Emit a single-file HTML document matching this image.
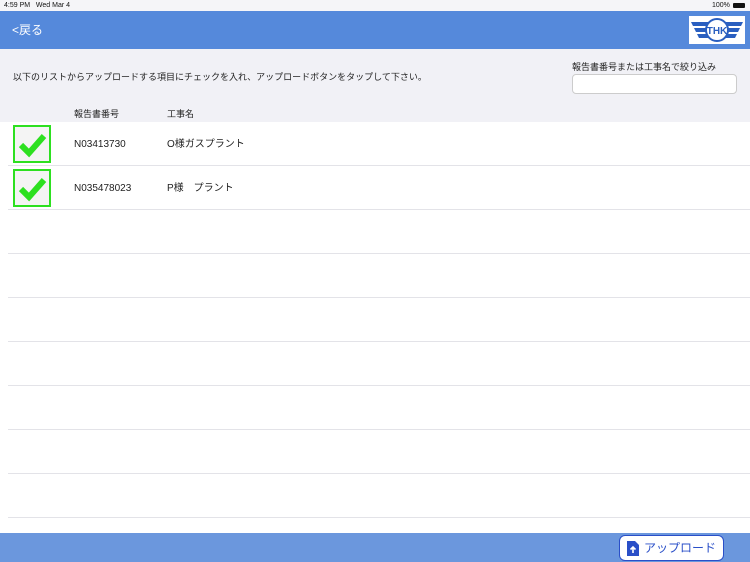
<!DOCTYPE html><html><head><meta charset="utf-8"><style>
body{margin:0;width:750px;height:562px;overflow:hidden;background:#f1f1f6;font-family:"Liberation Sans","Noto Sans CJK JP",sans-serif;position:relative}
.a{position:absolute}
.row{position:absolute;left:0;width:750px;height:44px;background:#fff}
.row:after{content:"";position:absolute;left:8px;right:0;bottom:0;height:1px;background:#e3e3e8}
.cb{position:absolute;left:13px;top:3px;width:34px;height:34px;border:2.5px solid #2de020;background:#f4f4f4}
.t{position:absolute;font-size:10px;color:#222;line-height:12px;white-space:nowrap}
.row .t{top:1px;line-height:43px}
</style></head><body>
<div class="a" style="left:0;top:0;width:750px;height:11px;background:#f5f5f8;font-size:7px;color:#111;line-height:11px"><span class="a" style="left:4px;top:0">4:59 PM&nbsp;&nbsp;&nbsp;Wed Mar 4</span><span class="a" style="left:712px;top:0">100%</span><span class="a" style="left:733px;top:3px;width:12px;height:5px;background:#111;border-radius:1px"></span></div>
<div class="a" style="left:0;top:11px;width:750px;height:38px;background:#5589db"></div>
<div class="a" style="left:12px;top:23px;color:#fff;font-size:12px;line-height:14px">&lt;戻る</div>
<svg class="a" style="left:689px;top:16px" width="56" height="28" viewBox="0 0 56 28"><rect width="56" height="28" fill="#fff"/><g fill="#2a5fc0"><polygon points="2,6 20,6 20,10 4,10"/><polygon points="5,12 20,12 20,16 7,16"/><polygon points="8,18 20,18 20,22 10,22"/><polygon points="54,6 36,6 36,10 52,10"/><polygon points="51,12 36,12 36,16 49,16"/><polygon points="48,18 36,18 36,22 46,22"/></g><circle cx="28" cy="14" r="11" fill="#fff" stroke="#2a5fc0" stroke-width="2"/><text x="28" y="18" font-size="10" text-anchor="middle" fill="#2a5fc0" font-family="Liberation Sans" font-weight="bold">THK</text></svg>
<div class="t" style="left:13px;top:71px;font-size:9px">以下のリストからアップロードする項目にチェックを入れ、アップロードボタンをタップして下さい。</div>
<div class="t" style="left:572px;top:61px;font-size:9px">報告書番号または工事名で絞り込み</div>
<div class="a" style="left:572px;top:74px;width:163px;height:18px;background:#fff;border:1px solid #ccc;border-radius:4px"></div>
<div class="t" style="left:74px;top:108px;font-size:9px">報告書番号</div>
<div class="t" style="left:167px;top:108px;font-size:9px">工事名</div>
<div class="row" style="top:122px"><div class="cb"><svg width="34" height="34"><path d="M6 18 L14 26 L29 9" stroke="#2de020" stroke-width="6" fill="none"/></svg></div><div class="t" style="left:74px">N03413730</div><div class="t" style="left:167px">O様ガスプラント</div></div>
<div class="row" style="top:166px"><div class="cb"><svg width="34" height="34"><path d="M6 18 L14 26 L29 9" stroke="#2de020" stroke-width="6" fill="none"/></svg></div><div class="t" style="left:74px">N035478023</div><div class="t" style="left:167px">P様　プラント</div></div>
<div class="row" style="top:210px"></div><div class="row" style="top:254px"></div><div class="row" style="top:298px"></div><div class="row" style="top:342px"></div><div class="row" style="top:386px"></div><div class="row" style="top:430px"></div><div class="row" style="top:474px"></div><div class="a" style="left:0;top:518px;width:750px;height:15px;background:#fff"></div>
<div class="a" style="left:0;top:533px;width:750px;height:29px;background:#6b97dd"></div>
<div class="a" style="left:619px;top:535px;width:103px;height:24px;background:#fff;border:1.5px solid #2a4fc8;border-radius:6px"><svg class="a" style="left:6px;top:4px" width="14" height="17"><path d="M1 1 H9 L13 5 V16 H1 Z" fill="#2a4fc8"/><path d="M7 13 V7 M4.5 9.5 L7 7 L9.5 9.5" stroke="#fff" stroke-width="1.6" fill="none"/></svg><span class="a" style="left:24px;top:0;line-height:24px;font-size:12px;color:#2a4fc8">アップロード</span></div>
</body></html>
